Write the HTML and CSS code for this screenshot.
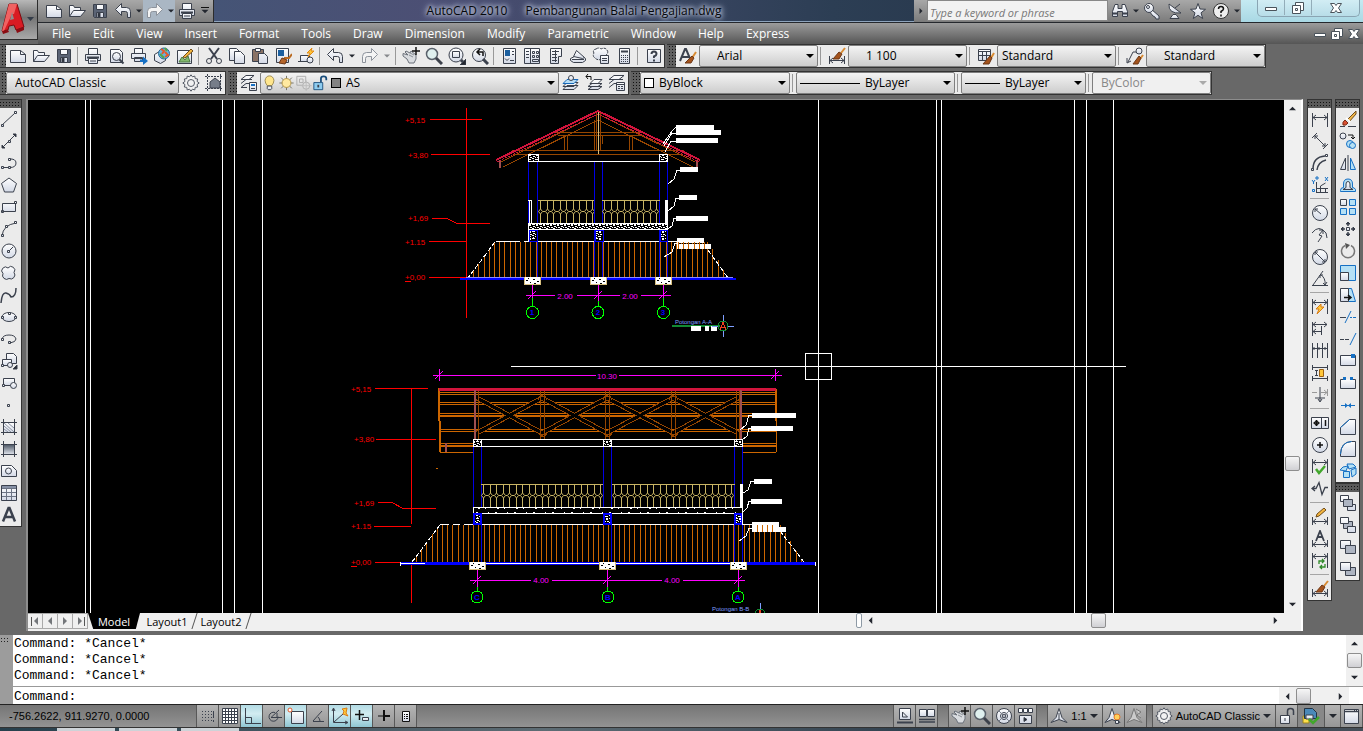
FILE: index.html
```html
<!DOCTYPE html>
<html lang="en">
<head>
  <meta charset="UTF-8">
  <meta name="viewport" content="width=device-width, initial-scale=1.0">
  <title>AutoCAD 2010 - Pembangunan Balai Pengajian.dwg</title>
  <link rel="stylesheet" href="styles.css">
</head>
<body>
  <!-- icon sprite -->
  <svg class="sprite" aria-hidden="true">
    <defs>
      <linearGradient id="paper" x1="0" y1="0" x2="0" y2="1"><stop offset="0" stop-color="#fff"/><stop offset="1" stop-color="#d3d9e6"/></linearGradient>
      <linearGradient id="fade" x1="0" y1="0" x2="0" y2="1"><stop offset="0" stop-color="#4b5563"/><stop offset="1" stop-color="#e2e6ee"/></linearGradient>
    </defs>
    <symbol id="new" viewBox="0 0 18 18"><path class="w" d="M1.500 3.500h10l5 4v8h-15z"/><path d="M11.500 3.500v4h5"/></symbol>
    <symbol id="open" viewBox="0 0 18 18"><path class="w" d="M1.500 14.500v-11h4l1 2h6v3"/><path class="w" d="M1.500 14.500l4-6h12l-5 6z"/></symbol>
    <symbol id="save" viewBox="0 0 18 18"><path d="M2.500 2.500h13v13h-12l-1-1z" fill="#5b6475"/><path class="w" d="M5.500 2.500h7v5h-7zM5.500 10.500h7v5h-7z"/><path class="k" d="M7 11h2v4h-2z"/></symbol>
    <symbol id="print" viewBox="0 0 18 18"><path class="w" d="M4.500 7.500v-6h9v6M1.500 7.500h15v6h-15z"/><path d="M3 10.500h12" stroke-width="2"/><path class="w" d="M4.500 11.500h9v5h-9zM6 14h6"/></symbol>
    <symbol id="preview" viewBox="0 0 18 18"><path class="w" d="M3.500 15.500v-13h9l3 3v10z"/><circle class="w" cx="9.500" cy="9.500" r="4"/><path d="M12.500 12.500l4 4" stroke-width="2"/></symbol>
    <symbol id="publish" viewBox="0 0 18 18"><path class="w" d="M4.500 6.500v-5h8v5M1.500 6.500h14v5h-14zM4.500 10.500h8v4h-8z"/><path d="M10 12.500h3v-3l5 4.500-5 4v-3h-3z" fill="#1670c4" stroke="none"/></symbol>
    <symbol id="globe" viewBox="0 0 18 18"><path class="w" d="M1.500 7.500l5-3 6 2v7l-5 3-6-3z"/><circle cx="11" cy="6.500" r="5.500" fill="#66b5df" stroke="#2a6a9d"/><path d="M8 2l3 2-2 3M12 5l3 3-3 2" stroke="#e4592a" stroke-width="2"/><path d="M7 7l4 4M12 1l2 3" stroke="#58a445" stroke-width="2"/></symbol>
    <symbol id="markup" viewBox="0 0 18 18"><path class="w" d="M1.500 3.500h14v13h-14z"/><path d="M3 15l3-5 3 3 3-4 2 6z" fill="#83b86c" stroke="#4c7d43"/><path d="M7 10l8-8 2 2-8 7z" fill="#f3b53f" stroke="#704d1b"/></symbol>
    <symbol id="cut" viewBox="0 0 18 18"><path d="M4 1l8 11M14 1L6 12" stroke-width="2"/><circle cx="4" cy="14" r="2.500"/><circle cx="14" cy="14" r="2.500"/></symbol>
    <symbol id="copyclip" viewBox="0 0 18 18"><path class="w" d="M1.500 1.500h7l3 3v9h-10z"/><path class="w" d="M6.500 4.500h6l4 4v8h-10z"/></symbol>
    <symbol id="paste" viewBox="0 0 18 18"><path d="M1.500 2.500h11v12h-11z" fill="#8a7265"/><path class="w" d="M4.500 1.500h5v3h-5zM7.500 6.500h6l3 3v7h-9z"/></symbol>
    <symbol id="match" viewBox="0 0 18 18"><path class="w" d="M2.500 1.500h12v14h-12z"/><path d="M4 3h6v6H4z" fill="#1b5f9f" stroke="none"/><path d="M10 11h5l3-4" stroke="#bb6b22" stroke-width="2"/><path d="M8 11l5 2-2 4-6-1z" fill="#b5652a" stroke="#6d3817"/></symbol>
    <symbol id="blockedit" viewBox="0 0 18 18"><path class="w" d="M3.500 8.500h9v6h-9z"/><circle class="w" cx="13" cy="13" r="3"/><path d="M1 14.500h5"/><path d="M15 1l-5 5h3l-2 4 6-6h-3z" fill="#ffc739" stroke="#e28b15"/></symbol>
    <symbol id="undo" viewBox="0 0 18 18"><path class="w" d="M1.500 7.500l6-6v4h5q4 0 4 4v6h-3v-4q0-2-2-2h-4v4z"/></symbol>
    <symbol id="redo" viewBox="0 0 18 18"><path d="M16.500 7.500l-6-6v4h-5q-4 0-4 4v6h3v-4q0-2 2-2h4v4z" fill="#f4f4f4" stroke="#8c929b"/></symbol>
    <symbol id="pan" viewBox="0 0 18 18"><path d="M1 6.500l5 1.500-3-3 1-1 4 2 1-2 5 4v4l-2 4H7l-2-4-4-3z" fill="#d9dce0" stroke="#6b717a"/><path d="M7 8l4 2M8 6l4 2" stroke="#8b9097"/><path d="M14 0v8M10 4h8" stroke="#111" stroke-width="1.500"/></symbol>
    <symbol id="zoom" viewBox="0 0 18 18"><circle cx="7" cy="7" r="5.500" fill="#dff0ef" stroke="#59616b" stroke-width="1.500"/><path d="M11 11l6 6" stroke="#3c414b" stroke-width="3"/></symbol>
    <symbol id="zoomwin" viewBox="0 0 18 18"><circle class="w" cx="8" cy="8" r="7"/><path class="w" d="M4.500 4.500h7v6h-7z"/><path d="M13 13l3 3" stroke-width="3"/><path class="k" d="M18 12v6h-6z"/></symbol>
    <symbol id="zoomprev" viewBox="0 0 18 18"><circle class="w" cx="8" cy="8" r="6.500"/><path d="M12 12l5 5" stroke-width="3"/><path d="M12 9V5H6M9 2L6 5l3 3" stroke="#111" stroke-width="1.500"/></symbol>
    <symbol id="props" viewBox="0 0 18 18"><path class="w" d="M3.500 1.500h12v15h-12z"/><path d="M5 3h5v6H5z" fill="#1b5f9f" stroke="none"/><path d="M12 4.500h2M12 7.500h2M5 11.500l2 2 2-2M10 13.500h4"/></symbol>
    <symbol id="dcenter" viewBox="0 0 18 18"><path class="w" d="M1.500 1.500h15v15h-15z"/><path d="M7.500 2v14M3 4.500h3M3 7.500h3M3 10.500h3M9.500 4.500h2v2h-2zM13.500 4.500h2v2h-2zM9.500 8.500h2v2h-2zM13.500 8.500h2v2h-2zM9.500 12.500h6v2h-6z"/></symbol>
    <symbol id="palette" viewBox="0 0 18 18"><path class="w" d="M4.500 1.500h11v8h-3v7h-8z"/><path d="M6 4.500h7M6 7.500h5M6 10.500h5M6 13.500h5M9.500 3v12"/></symbol>
    <symbol id="sheet" viewBox="0 0 18 18"><path class="w" d="M1.500 11.500l4-2h8l3 2v2l-3 2h-9l-3-2z"/><path class="w" d="M4.500 9.500l3-6 8 7-2 1zM3 12.500h12"/></symbol>
    <symbol id="markset" viewBox="0 0 18 18"><path class="w" stroke-dasharray="3 1" d="M4 2q3-2 5 0 4-2 6 1 2 3-1 5 0 4-4 4-4 2-7-1-3-2-1-5-2-3 2-4z"/><path class="w" d="M8.500 8.500h8v8h-8zM10 11.500h5M10 13.500h5"/></symbol>
    <symbol id="calc" viewBox="0 0 18 18"><path class="w" d="M4.500 1.500h10v15h-10z"/><path d="M6 4.500h7" stroke-width="2"/><path d="M6 8.500h7M6 10.500h7M6 12.500h7M6 14.500h7" stroke-dasharray="1 1"/></symbol>
    <symbol id="help" viewBox="0 0 18 18"><path class="w" d="M3.500 2.500h13v13h-13z"/><path d="M7.500 7q0-2.500 2.500-2.500T12.500 7q0 1.500-2.500 2.500v1.500M10 12.500v2" stroke-width="2"/></symbol>
    <symbol id="textstyle" viewBox="0 0 18 18"><path d="M1 14L6 2h1l5 12M3 10h7" stroke-width="2"/><path d="M17 5l-4 6" stroke="#d98b32" stroke-width="2"/><path d="M13 9l2 2-3 5-6 0z" fill="#a4531c" stroke="#6d3817"/></symbol>
    <symbol id="dimstyle" viewBox="0 0 18 18"><path d="M1.500 9v8M16.500 9v8M2 13.500h14M5 11l-3 2.500L5 16M13 11l3 2.500-3 2.500"/><path d="M17 1l-4 5" stroke="#d98b32" stroke-width="2"/><path d="M11 5l3 2-3 5-6 0z" fill="#a4531c" stroke="#6d3817"/></symbol>
    <symbol id="tablestyle" viewBox="0 0 18 18"><path class="w" d="M1.500 2.500h12v11h-12z"/><path d="M2 4.500h11M2 8.500h11M5.500 4v9M9.500 4v9"/><path d="M17 6l-3 5" stroke="#d98b32" stroke-width="2"/><path d="M13 9l2 2-3 6-6 0z" fill="#a4531c" stroke="#6d3817"/></symbol>
    <symbol id="mleader" viewBox="0 0 18 18"><path d="M2 15L7 5h4M1 11v5l4-2"/><circle class="w" cx="13" cy="4" r="3"/><path d="M17 8l-3 4" stroke="#d98b32" stroke-width="2"/><path d="M13 9l2 2-3 6-5 0z" fill="#a4531c" stroke="#6d3817"/></symbol>
    <symbol id="gear" viewBox="0 0 18 18"><path d="M9 .8l1.400 2 2.400-.7.400 2.500 2.500.4-.7 2.400 2.200 1.600-2.200 1.600.7 2.400-2.500.4-.4 2.500-2.400-.7L9 17.200l-1.400-2-2.400.7-.4-2.500-2.500-.4.7-2.400L.8 9l2.200-1.600L2.300 5l2.500-.4.400-2.500 2.400.7z" fill="#f2f2f2" stroke="#555b66"/><circle cx="9" cy="9" r="3.500" stroke="#555b66"/></symbol>
    <symbol id="mywork" viewBox="0 0 18 18"><path d="M0 2.500h18M0 14.500h18M2.500 0v18M15.500 0v18" stroke-dasharray="2 1"/><path d="M5 14V8l5-4 5 4v6z" fill="#767d89"/></symbol>
    <symbol id="layerprops" viewBox="0 0 18 18"><path class="w" d="M1 5.500l5-4h8l-5 4zM1 9.500l5-4h6M1 13.500l5-4h3M1 13.500h6"/><path class="w" d="M9.500 8.500h7v8h-7z"/><path d="M11 10h4v2h-4z" fill="#1670c4" stroke="none"/><path d="M11 14.500h4"/></symbol>
    <symbol id="bulb" viewBox="0 0 18 18"><path d="M6.500 12Q4 9 4 6q1-5 5-5t5 5q0 3-2.500 6z" fill="#ffe68d" stroke="#9a8648"/><path class="w" d="M6.500 12.500h5v3l-1 1h-3l-1-1z"/></symbol>
    <symbol id="sun" viewBox="0 0 18 18"><path d="M9 1v16M1 9h16M3 3l12 12M15 3L3 15" stroke="#6b6a5e"/><circle cx="9" cy="9" r="5" fill="#ffe9a0" stroke="#ad8e42"/></symbol>
    <symbol id="vpfreeze" viewBox="0 0 18 18"><path d="M1.500 1.500h10v10h-10zM4.500 4.500h4v4h-4z" stroke="#aaa"/><circle cx="12" cy="12" r="4" fill="#ddd" stroke="#aaa"/><path d="M12 6v12M6 12h12" stroke="#bbb"/></symbol>
    <symbol id="unlock" viewBox="0 0 18 18"><path d="M9.500 8V4q0-2.500 3-2.500t3 2.500v2" stroke="#1a4e7c" stroke-width="2"/><path d="M1.500 8.500h10v8h-10z" fill="#8fcdf0" stroke="#1a4e7c"/><path d="M6.500 11v3" stroke-width="2"/></symbol>
    <symbol id="lcurrent" viewBox="0 0 18 18"><path class="w" d="M1 15.500l4-4h11l-4 4zM1 12.500l4-4h11l-4 4z"/><path d="M1 9.500l4-4h11l-4 4z" fill="#b5dcf5" stroke="#1768b8"/><circle class="w" cx="9" cy="4" r="2.500"/></symbol>
    <symbol id="lprev" viewBox="0 0 18 18"><path class="w" d="M3 15.500l4-3h10l-4 3zM3 12.500l4-3h10l-4 3zM5 9.500l4-4h8l-4 4z"/><path d="M6 6V2.500H1M3 0L1 2.500 3 5" stroke="#111"/></symbol>
    <symbol id="lstate" viewBox="0 0 18 18"><path class="w" d="M1 5.500l5-4h10l-5 4zM1 9.500l5-4h9M1 13.500l5-4h3"/><path class="w" d="M8.500 8.500h8v8h-8z"/><path d="M8.500 10.500h8M10 12.500h2M13 12.500h2M10 14.500h2M13 14.500h2"/></symbol>

    <symbol id="line" viewBox="0 0 18 18"><path d="M2 15L15 3"/><path class="w" d="M1.500 14.500h2v2h-2zM14.500 1.500h2v2h-2z"/></symbol>
    <symbol id="xline" viewBox="0 0 18 18"><path d="M2 16L16 2"/><path class="w" d="M8.500 8.500h2v2h-2z"/><path class="k" d="M2 13v3h3zM13 2h3v3z"/></symbol>
    <symbol id="pline" viewBox="0 0 18 18"><path d="M3 13.500h7q6 0 6-4.500T9 5"/><path class="w" d="M1.500 12.500h2v2h-2zM8.500 12.500h2v2h-2zM8.500 4.500h2v2h-2z"/></symbol>
    <symbol id="polygon" viewBox="0 0 18 18"><path class="w" d="M9 2l7.500 5.500-3 8.500h-9l-3-8.500z"/></symbol>
    <symbol id="rect" viewBox="0 0 18 18"><path class="w" d="M2.500 5.500h13v8h-13zM1.500 12.500h2v2h-2zM14.500 3.500h2v2h-2z"/></symbol>
    <symbol id="arc" viewBox="0 0 18 18"><path d="M2 16Q3 5 16 3"/><path class="w" d="M1.500 14.500h2v2h-2zM14.500 1.500h2v2h-2zM5.500 5.500h2v2h-2z"/></symbol>
    <symbol id="circle" viewBox="0 0 18 18"><circle class="w" cx="9" cy="9" r="7"/><path d="M9 9l4-4"/><path class="w" d="M7.500 8.500h2v2h-2z"/></symbol>
    <symbol id="revcloud" viewBox="0 0 18 18"><path class="w" d="M8 4a3.500 3.500 0 0 1 6 4.500 4 4 0 0 1-5 6A4 4 0 0 1 3 9.500 3.500 3.500 0 1 1 8 4z"/></symbol>
    <symbol id="spline" viewBox="0 0 18 18"><path d="M1 17Q2 6 6 7t5 4q5 0 5-9" stroke-width="1.500"/></symbol>
    <symbol id="ellipse" viewBox="0 0 18 18"><ellipse class="w" cx="9" cy="9" rx="7" ry="4.500"/><path class="w" d="M1.500 8.500h2v2h-2zM8.500 4.500h2v2h-2zM14.500 8.500h2v2h-2z"/></symbol>
    <symbol id="ellarc" viewBox="0 0 18 18"><path d="M2 9q1-4 7-4t7 4q0 3-6 4" /><path class="w" d="M1.500 8.500h2v2h-2zM8.500 11.500h2v2h-2z"/></symbol>
    <symbol id="insert" viewBox="0 0 18 18"><path class="w" d="M6.500 1.500h7l3 3v7h-10z"/><path class="w" d="M2.500 7.500h9v6h-9z"/><circle class="w" cx="10" cy="13" r="2.500"/><path class="w" d="M1.500 12.500h2v2h-2z"/><path class="k" d="M17 13v4h-4z"/></symbol>
    <symbol id="makeblock" viewBox="0 0 18 18"><path class="w" d="M3.500 4.500h11v7h-11z"/><circle class="w" cx="13.500" cy="11.500" r="3"/><path class="w" d="M2.500 10.500h2v2h-2z"/></symbol>
    <symbol id="point" viewBox="0 0 18 18"><path class="w" d="M7.500 8.500h2v2h-2z"/></symbol>
    <symbol id="hatch" viewBox="0 0 18 18"><path class="w" d="M3.500 4.500h11v10h-11z"/><path d="M4 8l7 6M4 5l10 9M8 5l6 5M4 11l4 3" stroke="#8b93a3"/><path d="M1 4.500h16M1 14.500h16M3.500 1v16M14.500 1v16"/></symbol>
    <symbol id="gradient" viewBox="0 0 18 18"><path d="M3.500 4.500h11v10h-11z" fill="url(#fade)"/><path d="M1 4.500h16M1 14.500h16M3.500 1v16M14.500 1v16"/></symbol>
    <symbol id="region" viewBox="0 0 18 18"><path class="w" d="M1.500 3.500h10l5 5v6h-15z"/><circle class="w" cx="8.500" cy="9" r="3"/></symbol>
    <symbol id="table" viewBox="0 0 18 18"><path class="w" d="M1.500 1.500h15v15h-15z"/><path d="M2 3h14" stroke="#8791a5" stroke-width="2"/><path d="M2 4.500h14M2 8.500h14M2 12.500h14M6.500 5v11M11.500 5v11" stroke="#6c7484"/></symbol>
    <symbol id="mtext" viewBox="0 0 18 18"><path d="M3 15.500L8.500 2h1L15 15.500M5 11h8" stroke-width="2.500"/></symbol>

    <symbol id="dlin" viewBox="0 0 18 18"><path d="M1.500 3v14M16.500 3v14M2 7.500h14M5 5L2 7.500 5 10M13 5l3 2.500-3 2.500"/></symbol>
    <symbol id="dali" viewBox="0 0 18 18"><path d="M1 6l5-5M12 17l5-5M4 4l10 10M4 7V4h3M14 11v3h-3"/></symbol>
    <symbol id="darc" viewBox="0 0 18 18"><path d="M2 15Q2 3 14 2M6 16Q7 8 15 6" stroke-width="1.500"/><path class="w" d="M.5 14.500h2v2h-2zM14.500 .5h2v2h-2z"/></symbol>
    <symbol id="dord" viewBox="0 0 18 18"><path d="M5.500 6v11M9.500 17v-7l5-3M5 12.500h12M5 16.500h12M14.500 12v5"/><path class="b" d="M1 4l1.500 2L4 4M2.500 6v2M5 1h2v2H5zM14 1l3 4M17 1l-3 4M1.500 13.500h2v2h-2z"/></symbol>
    <symbol id="drad" viewBox="0 0 18 18"><circle class="w" cx="9" cy="9" r="7.500"/><path d="M10 10L4 5M4 8V5h3"/></symbol>
    <symbol id="djog" viewBox="0 0 18 18"><path d="M1 7q7-9 14 0l1 5M12 4L8 9l3 1-4 6M12 8V4H8"/></symbol>
    <symbol id="ddia" viewBox="0 0 18 18"><circle class="w" cx="9" cy="9" r="7.500"/><path d="M4 4l10 10M4 7V4h3M14 11v3h-3"/></symbol>
    <symbol id="dang" viewBox="0 0 18 18"><path d="M1 15.500h16M2 15L12 1M9 4q6 4 5 11M12 5H9v3M12 13l2 2 2-3"/></symbol>
    <symbol id="dquick" viewBox="0 0 18 18"><path d="M1.500 1v15M16.500 1v15M2 4.500h14M5 2L2 4.500 5 7M13 2l3 2.500L13 7"/><path d="M10 6l-5 5h3l-2 5 7-7h-3z" fill="#ffc739" stroke="#d97d15"/></symbol>
    <symbol id="dbase" viewBox="0 0 18 18"><path d="M1.500 2v14M2 4.500h14M2 11.500h8M10.500 6v9M5 2L2 4.500 5 7M13 2l3 2.500L13 7M5 9l-3 2.500L5 14"/></symbol>
    <symbol id="dcont" viewBox="0 0 18 18"><path d="M1.500 1v15M6.500 1v15M11.500 1v15M16.500 1v15M2 6.500h14M3 5v3M8 5v3M14 5v3"/></symbol>
    <symbol id="dspace" viewBox="0 0 18 18"><path d="M1 3.500h16M1 14.500h16M1.500 1v5M16.500 1v5M1.500 12v5M16.500 12v5M5.500 6v6M4 6.500h3M4 11.500h3"/><path d="M8.500 5.500h4v7h-4z" fill="#ffc739" stroke="#9c6011"/></symbol>
    <symbol id="dbreak" viewBox="0 0 18 18"><path d="M1 6.500h5M10 6.500h6M16.500 3v7M13 4l3 2.500L13 9" stroke="#999"/><path d="M9 1v14M4 12h10M7 13l2 3 2-3"/></symbol>
    <symbol id="tol" viewBox="0 0 18 18"><path class="w" d="M.5 3.500h17v11H.5zM10.500 4v10"/><path d="M5.500 6v6M2.500 9h6M14.500 6v6" stroke="#111" stroke-width="1.500"/><circle cx="5.500" cy="9" r="2" stroke="#111"/></symbol>
    <symbol id="center" viewBox="0 0 18 18"><circle class="w" cx="9" cy="9" r="7.500"/><path d="M9 6v6M6 9h6" stroke="#111" stroke-width="1.500"/></symbol>
    <symbol id="inspect" viewBox="0 0 18 18"><path d="M1.500 1v14M16.500 1v14M2 4.500h14M5 2L2 4.500 5 7M13 2l3 2.500L13 7"/><path d="M5 11l3 4 6-7" stroke="#42a72c" stroke-width="2.500"/></symbol>
    <symbol id="joglin" viewBox="0 0 18 18"><path d="M1 8.500h4l3-6 3 12 3-7h3M4 6L1 8.500 4 11" stroke-width="1.300"/></symbol>
    <symbol id="dedit" viewBox="0 0 18 18"><path d="M1.500 9v8M16.500 9v8M2 13.500h14M5 11l-3 2.500L5 16M13 11l3 2.500-3 2.500"/><path d="M5 9l1-3 7-6 2 2-7 6z" fill="#f3b53f" stroke="#704d1b"/></symbol>
    <symbol id="dtedit" viewBox="0 0 18 18"><path d="M1.500 10v7M16.500 10v7M2 14.500h14M5 12l-3 2.500L5 17M13 12l3 2.500-3 2.500"/><path d="M5 11L9 1l4 10M7 7h5" stroke-width="1.800"/></symbol>
    <symbol id="dupd" viewBox="0 0 18 18"><path d="M1.500 1v15M16.500 1v15M2 4.500h14M5 2L2 4.500 5 7M13 2l3 2.500L13 7"/><path d="M8 12V9h5M11 7l2 2-2 2M14 12v3H9M11 13l-2 2 2 2" stroke="#2f8a28" stroke-width="1.300"/></symbol>

    <symbol id="erase" viewBox="0 0 18 18"><path d="M1 16.500h5M9 16.500h8"/><path d="M17 1L8 10l2 2 7-8z" fill="#f0b64a" stroke="#704d1b"/><path d="M7 8l4 4" stroke="#fff" stroke-width="2"/><path d="M6 10l3 3q-2 3-5 2-1-3 2-5z" fill="#d94f31" stroke="#7a2a15"/></symbol>
    <symbol id="copy" viewBox="0 0 18 18"><circle class="w" cx="4" cy="4" r="3"/><path d="M9 3h5v4M12 5l2 2 2-2" stroke="#111"/><circle class="lb" cx="11" cy="12" r="3.500"/><circle class="lb" cx="13.500" cy="13.500" r="3"/></symbol>
    <symbol id="mirror" viewBox="0 0 18 18"><path class="w" d="M6.500 4v11.500h-5z"/><path class="lb" d="M11.500 4v11.500h5z"/><path d="M9 1v16"/></symbol>
    <symbol id="offset" viewBox="0 0 18 18"><path class="lb" d="M1.500 15.500h15v-2q-1-2-3-2V8q0-5-4.500-5T4.500 8v3.500q-3 0-3 3z"/><path class="w" d="M4 13.500h10l-3-2V8q0-2.500-2-2.500T7 8v3.500z"/></symbol>
    <symbol id="array" viewBox="0 0 18 18"><path class="w" d="M1.500 1.500h6v6h-6z"/><path class="lb" d="M10.500 1.500h6v6h-6zM1.500 10.500h6v6h-6zM10.500 10.500h6v6h-6z"/></symbol>
    <symbol id="move" viewBox="0 0 18 18"><path class="k" d="M9 2l2 2H7zM9 16l2-2H7zM2 9l2-2v4zM16 9l-2-2v4z"/><path d="M9 3v3M9 12v3M3 9h3M12 9h3" stroke-width="1.500"/><path class="w" d="M7.500 7.500h3v3h-3z"/></symbol>
    <symbol id="rotate" viewBox="0 0 18 18"><path d="M6 3.500a6.500 6.500 0 1 0 6 0" stroke="#777" stroke-width="1.500"/><path d="M6 1l5 2-4 4z" fill="#555" stroke="none"/></symbol>
    <symbol id="scale" viewBox="0 0 18 18"><path class="lb" d="M1.500 1.500h15v15h-15z"/><path class="w" d="M1.500 8.500h8v8h-8z"/></symbol>
    <symbol id="stretch" viewBox="0 0 18 18"><path class="lb" d="M9.500 2.500h3l4 13h-7z"/><path class="w" d="M1.500 2.500h8v13h-8z"/><path d="M5 11.500h7M9 9l3 2.500L9 14" stroke="#111" stroke-width="1.500"/></symbol>
    <symbol id="trim" viewBox="0 0 18 18"><path d="M1 9.500h6"/><path class="b" d="M6 15l6-12M11 9.500h2M14 9.500h3"/></symbol>
    <symbol id="extend" viewBox="0 0 18 18"><path d="M1 9.500h4M6 9.500h4"/><path class="b" d="M11 15l6-12"/></symbol>
    <symbol id="breakpt" viewBox="0 0 18 18"><path class="w" d="M1.500 3.500h15v10h-15z"/><path d="M12 2h4v4h-4z" fill="#1670c4" stroke="none"/></symbol>
    <symbol id="break" viewBox="0 0 18 18"><path class="w" d="M5.500 5.500h-4v9h15v-9h-4"/><path d="M4 3h3v3H4zM11 3h3v3h-3z" fill="#1670c4" stroke="none"/></symbol>
    <symbol id="join" viewBox="0 0 18 18"><path class="b" d="M2 9.500h14"/><path d="M6 7l3 2.500L6 12zM12 7L9 9.500l3 2.500z" fill="#1670c4" stroke="none"/></symbol>
    <symbol id="chamfer" viewBox="0 0 18 18"><path class="w" d="M1.500 9.500v7h15v-15h-6z"/><path class="b" d="M1.500 9.500l9-8"/></symbol>
    <symbol id="fillet" viewBox="0 0 18 18"><path class="w" d="M1.500 14v2.500h15v-15h-4Q2 2 1.500 14z"/><path class="b" d="M1.500 14Q2 2 12.500 1.500"/></symbol>
    <symbol id="explode" viewBox="0 0 18 18"><path class="lb" d="M1 8l3-3 5-1-2 5zM8 2h6l3 3-7 2zM4.500 9.500h6v6h-6zM12 8l5-2v6l-4 3z"/></symbol>
    <symbol id="front" viewBox="0 0 18 18"><path class="w" d="M1.500 1.500h8v6h-8zM8.500 10.500h8v6h-8z"/><path d="M4.500 5.500h9v7h-9z" fill="#aeb5c2"/></symbol>
    <symbol id="back" viewBox="0 0 18 18"><path d="M4.500 5.500h9v7h-9z" fill="#aeb5c2"/><path class="w" d="M1.500 1.500h8v6h-8zM8.500 10.500h8v6h-8z"/></symbol>
    <symbol id="above" viewBox="0 0 18 18"><path class="w" d="M1.500 2.500h10v8h-10z"/><path d="M6.500 7.500h10v8h-10z" fill="#aeb5c2"/></symbol>
    <symbol id="under" viewBox="0 0 18 18"><path d="M6.500 7.500h10v8h-10z" fill="#aeb5c2"/><path class="w" d="M1.500 2.500h10v8h-10z"/></symbol>

    <symbol id="binoc" viewBox="0 0 18 18"><path class="w" d="M4 2.500h3v4h4v-4h3l2.500 7v5h-5v-5h-5v5h-5v-5z"/><path d="M2 11.500h4M12 11.500h4" stroke-width="2"/></symbol>
    <symbol id="key" viewBox="0 0 18 18"><path class="w" d="M8 7l8 7v3h-3l-1-2-2-1-4-5z"/><circle class="w" cx="6" cy="6" r="4.500"/><circle cx="5" cy="5" r="1.500"/></symbol>
    <symbol id="dish" viewBox="0 0 18 18"><path class="w" d="M4 16.500h9l-3-4H7z"/><path class="w" d="M3 2q-1 10 12 9z"/><path d="M9 6l5-4"/></symbol>
    <symbol id="star" viewBox="0 0 18 18"><path class="w" d="M9 1.500l2 5.500 5.500.3-4.500 3.500 1.700 5.700L9 13.300l-4.700 3.200L6 10.800 1.500 7.300 7 7z"/></symbol>
    <symbol id="info" viewBox="0 0 18 18"><circle cx="9" cy="9" r="7.500" fill="#eee" stroke="#333"/><path d="M6.500 7Q6.500 4.500 9 4.500T11.500 7Q11.500 8 9 9.500V11M9 12.500v2" stroke="#111" stroke-width="1.500"/></symbol>
    <symbol id="min" viewBox="0 0 14 14"><path d="M1.500 6.500h11v3h-11z"/></symbol>
    <symbol id="restore" viewBox="0 0 14 14"><path d="M4.500 1.500h8v8h-8z"/><path d="M1.500 4.500h8v8h-8z"/><path d="M4.500 7.500h2v2h-2z"/></symbol>
    <symbol id="close" viewBox="0 0 14 14"><path d="M1.500 2.500h4L7 4.500l1.500-2h4L9.500 7l3 4.500h-4L7 9.500l-1.500 2h-4l3-4.500z"/></symbol>

    <symbol id="snap" viewBox="0 0 18 18"><path d="M3 4.500h10M3 7.500h10M3 10.500h10M3 13.500h10" stroke-dasharray="1 2"/><path d="M14.500 4v7M14.500 13v2"/></symbol>
    <symbol id="grid" viewBox="0 0 18 18"><path d="M1.500 1.500h15v15h-15zM4.500 2v14M7.500 2v14M10.500 2v14M13.500 2v14M2 4.500h14M2 7.500h14M2 10.500h14M2 13.500h14" fill="#fff"/></symbol>
    <symbol id="ortho" viewBox="0 0 18 18"><path d="M2.500 1v15.500H18M3 10.500h5.500v6"/></symbol>
    <symbol id="polar" viewBox="0 0 18 18"><path d="M10 5.500a4.500 4.500 0 1 0 3 4M6 10.500L14 3M6 10.500h11M12 6v4"/></symbol>
    <symbol id="osnap" viewBox="0 0 18 18"><path class="w" d="M4.500 4.500h12v12h-12z"/><circle cx="3" cy="3" r="2" stroke="#e4592a" fill="#fff"/></symbol>
    <symbol id="otrack" viewBox="0 0 18 18"><path d="M4 14.500h11M4 14L13 4M9 10q2 2 2 4"/></symbol>
    <symbol id="ducs" viewBox="0 0 18 18"><path d="M2.500 2v13.500H16M3 15l9-8M1 4l1.500-3L4 4M14 14l3 1.500-3 1.500"/><path d="M11 2l5-1-1 5 2 3-5-2 1-3z" fill="#ffc739" stroke="#d97d15"/></symbol>
    <symbol id="dyn" viewBox="0 0 18 18"><path d="M6.500 3v10M2 7.500h9" stroke="#111" stroke-width="1.500"/><path class="w" d="M9.500 10.500h6v3h-6z"/></symbol>
    <symbol id="lwt" viewBox="0 0 18 18"><path d="M3 9h7" stroke="#111"/><path d="M9 3v11M9 9h6" stroke="#111" stroke-width="2"/></symbol>
    <symbol id="qp" viewBox="0 0 18 18"><path class="w" d="M5.500 4.500h7v10h-7z" stroke="#111"/><path d="M7 7.500h1M9 7.500h2M7 9.500h1M9 9.500h2M7 11.500h1M9 11.500h2" stroke="#111"/></symbol>
    <symbol id="model" viewBox="0 0 18 18"><path class="w" d="M3.500 1.500h11v11h-11z"/><path d="M6.500 5v5h5z"/><path d="M1 15.500h16" stroke-width="2"/></symbol>
    <symbol id="qview" viewBox="0 0 18 18"><path class="w" d="M1.500 2.500h7v7h-7zM9.500 2.500h7v7h-7z"/><path d="M1 12.500h16M1 15h16" stroke-width="1.500"/></symbol>
    <symbol id="wheel" viewBox="0 0 18 18"><circle class="w" cx="9" cy="9" r="7.500"/><circle cx="9" cy="9" r="3.500"/><path d="M4 4l10 10M14 4L4 14" stroke="#7b818c"/><circle class="w" cx="9" cy="9" r="1.500"/></symbol>
    <symbol id="motion" viewBox="0 0 18 18"><path class="w" d="M1.500 1.500h4v4h-4zM6.500 1.500h4v4h-4zM11.500 1.500h4v4h-4zM2.500 8.500h12v8h-12z"/><path class="k" d="M7 10.500l3 2L7 14.500z"/></symbol>
    <symbol id="anno" viewBox="0 0 18 18"><path class="w" d="M9 1.500l3 9 5 5-8-3-8 3 5-5z"/><path d="M9 6v6"/></symbol>
    <symbol id="annovis" viewBox="0 0 18 18"><path class="w" d="M8 1.500l3 9 5 5-8-3-7 3 4-5z"/><circle cx="13" cy="10" r="3" fill="#ffd15c" stroke="#e4762a"/><path class="w" d="M11.500 13.500h3v3h-3z"/></symbol>
    <symbol id="annoauto" viewBox="0 0 18 18"><path d="M8 1.500l3 9 5 5-8-3-7 3 4-5zM10 2l5 3-4 3 4 3" fill="#ccc" stroke="#777"/></symbol>
    <symbol id="tunlock" viewBox="0 0 18 18"><path d="M9.500 8V4q0-2.500 3-2.500t3 2.500v4" stroke-width="1.500"/><path class="w" d="M2.500 8.500h9v8h-9z"/><path d="M7 11v3"/></symbol>
    <symbol id="tray" viewBox="0 0 18 18"><path d="M1 9h6v7H1z" fill="#ffe04a" stroke="#9b8420"/><path d="M2.500 1.500h8l4 4v6h-12z" fill="#4a89b9" stroke="#234"/><path class="w" d="M4 8h7v4H4z"/><path d="M7 12l4 4 6-6" stroke="#42a72c" stroke-width="2.500"/></symbol>
    <symbol id="clean" viewBox="0 0 18 18"><path class="w" d="M1.500 2.500h14v14h-14z"/><path d="M2 4.500h13M11 3.500h1M13 3.500h1" stroke-width="1.500"/></symbol>
    <symbol id="up" viewBox="0 0 8 8"><path class="k" d="M0 6l4-4 4 4z" stroke="none"/></symbol>
    <symbol id="down" viewBox="0 0 8 8"><path class="k" d="M0 2h8L4 6z" stroke="none"/></symbol>
    <symbol id="left" viewBox="0 0 8 8"><path class="k" d="M6 0v8L2 4z" stroke="none"/></symbol>
    <symbol id="right" viewBox="0 0 8 8"><path class="k" d="M2 0v8l4-4z" stroke="none"/></symbol>
  </svg>

  <header class="header">
    <button class="app-button" aria-label="Application menu">
      <svg class="app-logo" viewBox="0 0 38 39"><path d="M2 31L9 4l8 0 7 23-8 3-2-5-5 1-1 4z" fill="#d91b23" stroke="#7d0b10"/><path d="M9 4l8 0-3 10-2 0-8 17H2z" fill="#f06262"/><path d="M10 20l2-8 2 7z" fill="#8d8d8d"/><path d="M2 31l6-1 1 2-6 2zM16 30l8-3v3l-7 3z" fill="#8b0d13"/><path d="M27 17h7l-3.500 4z" fill="#333b48"/></svg>
    </button>
    <div class="titlebar">
      <div class="quick">
        <button class="tool" aria-label="New"><svg class="icon"><use href="#new"/></svg></button>
        <button class="tool" aria-label="Open"><svg class="icon"><use href="#open"/></svg></button>
        <button class="tool" aria-label="Save"><svg class="icon"><use href="#save"/></svg></button>
        <button class="tool" aria-label="Undo"><svg class="icon"><use href="#undo"/></svg></button>
        <button class="drop" aria-label="Undo list"><svg><use href="#down"/></svg></button>
        <button class="tool lit" aria-label="Redo"><svg class="icon"><use href="#redo"/></svg></button>
        <button class="drop lit" aria-label="Redo list"><svg><use href="#down"/></svg></button>
        <button class="tool" aria-label="Plot"><svg class="icon"><use href="#print"/></svg></button>
        <button class="drop more" aria-label="Customize"><svg><use href="#down"/></svg></button>
      </div>
      <div class="title"><span>AutoCAD 2010</span><span>Pembangunan Balai Pengajian.dwg</span></div>
      <div class="infocenter">
        <button class="drop" aria-label="Collapse search"><svg><use href="#right"/></svg></button>
        <input type="text" class="search" placeholder="Type a keyword or phrase" aria-label="Search">
        <button class="tool" aria-label="Search"><svg class="icon"><use href="#binoc"/></svg></button>
        <button class="drop" aria-label="Search options"><svg><use href="#down"/></svg></button>
        <button class="tool" aria-label="Subscription"><svg class="icon"><use href="#key"/></svg></button>
        <button class="tool" aria-label="Communication"><svg class="icon"><use href="#dish"/></svg></button>
        <button class="tool" aria-label="Favorites"><svg class="icon"><use href="#star"/></svg></button>
        <button class="tool" aria-label="Help"><svg class="icon"><use href="#info"/></svg></button>
        <button class="drop" aria-label="Help options"><svg><use href="#down"/></svg></button>
      </div>
      <div class="aero">
        <div class="window-buttons">
          <button aria-label="Minimize"><svg><use href="#min"/></svg></button>
          <button aria-label="Restore"><svg><use href="#restore"/></svg></button>
          <button class="wide" aria-label="Close"><svg><use href="#close"/></svg></button>
        </div>
      </div>
    </div>
    <nav class="menubar">
      <a href="#">File</a><a href="#">Edit</a><a href="#">View</a><a href="#">Insert</a><a href="#">Format</a><a href="#">Tools</a><a href="#">Draw</a><a href="#">Dimension</a><a href="#">Modify</a><a href="#">Parametric</a><a href="#">Window</a><a href="#">Help</a><a href="#">Express</a>
      <div class="doc-buttons">
        <button aria-label="Minimize drawing"><svg><use href="#min"/></svg></button>
        <button aria-label="Restore drawing"><svg><use href="#restore"/></svg></button>
        <button aria-label="Close drawing"><svg><use href="#close"/></svg></button>
      </div>
    </nav>
  </header>

  <div class="toolrow">
    <div class="toolbar">
      <span class="grip first"></span>
      <button class="tool" aria-label="QNew"><svg class="icon"><use href="#new"/></svg></button>
      <button class="tool" aria-label="Open drawing"><svg class="icon"><use href="#open"/></svg></button>
      <button class="tool" aria-label="Save drawing"><svg class="icon"><use href="#save"/></svg></button>
      <span class="sep"></span>
      <button class="tool" aria-label="Plot"><svg class="icon"><use href="#print"/></svg></button>
      <button class="tool" aria-label="Plot preview"><svg class="icon"><use href="#preview"/></svg></button>
      <button class="tool" aria-label="Publish"><svg class="icon"><use href="#publish"/></svg></button>
      <button class="tool" aria-label="3DDWF"><svg class="icon"><use href="#globe"/></svg></button>
      <button class="tool" aria-label="Markup"><svg class="icon"><use href="#markup"/></svg></button>
      <span class="sep"></span>
      <button class="tool" aria-label="Cut"><svg class="icon"><use href="#cut"/></svg></button>
      <button class="tool" aria-label="Copy to clipboard"><svg class="icon"><use href="#copyclip"/></svg></button>
      <button class="tool" aria-label="Paste"><svg class="icon"><use href="#paste"/></svg></button>
      <button class="tool" aria-label="Match properties"><svg class="icon"><use href="#match"/></svg></button>
      <button class="tool" aria-label="Block editor"><svg class="icon"><use href="#blockedit"/></svg></button>
      <span class="sep"></span>
      <button class="tool" aria-label="Undo"><svg class="icon"><use href="#undo"/></svg></button>
      <button class="drop std" aria-label="Undo list"><svg><use href="#down"/></svg></button>
      <button class="tool" aria-label="Redo"><svg class="icon"><use href="#redo"/></svg></button>
      <button class="drop std off" aria-label="Redo list"><svg><use href="#down"/></svg></button>
      <span class="sep"></span>
      <button class="tool" aria-label="Pan"><svg class="icon"><use href="#pan"/></svg></button>
      <button class="tool" aria-label="Zoom realtime"><svg class="icon"><use href="#zoom"/></svg></button>
      <button class="tool" aria-label="Zoom window"><svg class="icon"><use href="#zoomwin"/></svg></button>
      <button class="tool" aria-label="Zoom previous"><svg class="icon"><use href="#zoomprev"/></svg></button>
      <span class="sep"></span>
      <button class="tool" aria-label="Properties"><svg class="icon"><use href="#props"/></svg></button>
      <button class="tool" aria-label="DesignCenter"><svg class="icon"><use href="#dcenter"/></svg></button>
      <button class="tool" aria-label="Tool palettes"><svg class="icon"><use href="#palette"/></svg></button>
      <button class="tool" aria-label="Sheet set manager"><svg class="icon"><use href="#sheet"/></svg></button>
      <button class="tool" aria-label="Markup set manager"><svg class="icon"><use href="#markset"/></svg></button>
      <button class="tool" aria-label="QuickCalc"><svg class="icon"><use href="#calc"/></svg></button>
      <span class="sep"></span>
      <button class="tool" aria-label="Help"><svg class="icon"><use href="#help"/></svg></button>
    </div>
    <div class="toolbar styles">
      <span class="grip"></span>
      <button class="tool" aria-label="Text style"><svg class="icon"><use href="#textstyle"/></svg></button>
      <div class="combo style in"><select aria-label="Text style control"><option>Arial</option></select></div>
      <span class="sep"></span>
      <button class="tool" aria-label="Dimension style"><svg class="icon"><use href="#dimstyle"/></svg></button>
      <div class="combo style in"><select aria-label="Dim style control"><option>1 100</option></select></div>
      <span class="sep"></span>
      <button class="tool" aria-label="Table style"><svg class="icon"><use href="#tablestyle"/></svg></button>
      <div class="combo style"><select aria-label="Table style control"><option>Standard</option></select></div>
      <span class="sep"></span>
      <button class="tool" aria-label="Multileader style"><svg class="icon"><use href="#mleader"/></svg></button>
      <div class="combo style in"><select aria-label="Multileader style control"><option>Standard</option></select></div>
    </div>
  </div>

  <div class="toolrow">
    <div class="toolbar">
      <span class="grip first"></span>
      <div class="combo workspace"><select aria-label="Workspace"><option>AutoCAD Classic</option></select></div>
      <button class="tool" aria-label="Workspace settings"><svg class="icon"><use href="#gear"/></svg></button>
      <button class="tool" aria-label="My workspace"><svg class="icon"><use href="#mywork"/></svg></button>
    </div>
    <div class="toolbar">
      <span class="grip"></span>
      <button class="tool" aria-label="Layer properties"><svg class="icon"><use href="#layerprops"/></svg></button>
      <div class="combo layer">
        <select aria-label="Layer"><option>AS</option></select>
        <span class="marks">
          <svg class="icon"><use href="#bulb"/></svg><svg class="icon"><use href="#sun"/></svg><svg class="icon"><use href="#vpfreeze"/></svg><svg class="icon"><use href="#unlock"/></svg><i class="swatch gray"></i>
        </span>
      </div>
      <button class="tool" aria-label="Make layer current"><svg class="icon"><use href="#lcurrent"/></svg></button>
      <button class="tool" aria-label="Layer previous"><svg class="icon"><use href="#lprev"/></svg></button>
      <button class="tool" aria-label="Layer states"><svg class="icon"><use href="#lstate"/></svg></button>
    </div>
    <div class="toolbar">
      <span class="grip"></span>
      <div class="combo color"><select aria-label="Color control"><option>ByBlock</option></select><span class="marks"><i class="swatch"></i></span></div>
      <span class="sep"></span>
      <div class="combo ltype"><select aria-label="Linetype control"><option>ByLayer</option></select><span class="marks"><i class="rule"></i></span></div>
      <span class="sep"></span>
      <div class="combo lweight"><select aria-label="Lineweight control"><option>ByLayer</option></select><span class="marks"><i class="rule"></i></span></div>
      <span class="sep"></span>
      <div class="combo plot"><select aria-label="Plot style control" disabled><option>ByColor</option></select></div>
    </div>
  </div>

  <main class="workspace-area">
    <div class="palette left">
      <span class="grip-h"></span>
      <button aria-label="Line"><svg class="icon"><use href="#line"/></svg></button>
      <button aria-label="Construction line"><svg class="icon"><use href="#xline"/></svg></button>
      <button aria-label="Polyline"><svg class="icon"><use href="#pline"/></svg></button>
      <button aria-label="Polygon"><svg class="icon"><use href="#polygon"/></svg></button>
      <button aria-label="Rectangle"><svg class="icon"><use href="#rect"/></svg></button>
      <button aria-label="Arc"><svg class="icon"><use href="#arc"/></svg></button>
      <button aria-label="Circle"><svg class="icon"><use href="#circle"/></svg></button>
      <button aria-label="Revision cloud"><svg class="icon"><use href="#revcloud"/></svg></button>
      <button aria-label="Spline"><svg class="icon"><use href="#spline"/></svg></button>
      <button aria-label="Ellipse"><svg class="icon"><use href="#ellipse"/></svg></button>
      <button aria-label="Ellipse arc"><svg class="icon"><use href="#ellarc"/></svg></button>
      <button aria-label="Insert block"><svg class="icon"><use href="#insert"/></svg></button>
      <button aria-label="Make block"><svg class="icon"><use href="#makeblock"/></svg></button>
      <button aria-label="Point"><svg class="icon"><use href="#point"/></svg></button>
      <button aria-label="Hatch"><svg class="icon"><use href="#hatch"/></svg></button>
      <button aria-label="Gradient"><svg class="icon"><use href="#gradient"/></svg></button>
      <button aria-label="Region"><svg class="icon"><use href="#region"/></svg></button>
      <button aria-label="Table"><svg class="icon"><use href="#table"/></svg></button>
      <button aria-label="Multiline text"><svg class="icon"><use href="#mtext"/></svg></button>
    </div>

    <section class="drawing-window">
      <svg class="canvas" role="img" aria-label="Model space">
        <defs>
          <pattern id="soil" width="26" height="60" patternUnits="userSpaceOnUse"><path d="M.5 0v60M5.500 0v60M10.500 0v60M16.500 0v60M21.500 0v60" stroke="#cc6600"/></pattern>
          <pattern id="concrete" width="19" height="7" patternUnits="userSpaceOnUse"><path d="M1 1h2v1h-2zM8 2h3v1h-3zM3 4h2v1h-2zM13 1h1v2h-1zM16 3h2v1h-2zM10 4h1v1h-1z" fill="#fff"/></pattern>
          <pattern id="dense" width="7" height="7" patternUnits="userSpaceOnUse"><path d="M0 0h3v1h-3zM4 0h2v2h-2zM1 2h2v1h-2zM3 3h1v1h-1zM5 3h2v1h-2zM0 4h2v1h-2zM3 5h3v1h-3zM1 6h1v1h-1z" fill="#fff"/></pattern>
          <pattern id="rail" width="13" height="24" patternUnits="userSpaceOnUse"><path d="M2.500 0v9M2.500 14v10M9.500 0v9M9.500 14v10M2.500 9l2 2.500-2 2.500-2-2.500zM9.500 9l2 2.500-2 2.500-2-2.500zM5 11.500h2M12 11.500h1" stroke="#c8b464" fill="none"/></pattern>
          <g id="north"><circle r="5" stroke="#128a32"/><path d="M.5-11V-5M.5 5V11M-11 .5H-5M5 .5H11" stroke="#7f9fff"/><path d="M-3 4L0-4 3 4M-2 1h4" stroke="#f04020"/></g>
          <g id="footing"><path d="M0 0h17v8H0z" fill="#fff"/><path d="M2 3h2v1H2zM6 5h1v1H6zM9 2h2v1H9zM13 4h2v1h-2zM4 1h1v1H4zM10 6h2v1h-2z" fill="#000"/><path d="M.5 0v7.500h16V0" stroke="#d8c080"/></g>
          <g id="tick"><path d="M.5-6v12M-4 4l8-8" stroke="#f0f"/></g>
        </defs>
        <g class="sheet" transform="translate(-28 -100)">
          <path class="white" d="M85.500 100V900M90.500 100V900M222.500 100V900M234.500 100V900M262.500 100V900M936.500 100V900M941.500 100V900M1074.500 100V900M1086.500 100V900M1113.500 100V900"/>

          <!-- Potongan A-A -->
          <path class="red" d="M466.500 108V318M430 119.500H482M431 154.500H490M432 218.500H447L457 223.500H490M429 241.500H490M429 277.500H490M405 281.500h6"/>
          <g class="level"><text x="405" y="123">+5,15</text><text x="408" y="158">+3,80</text><text x="408" y="221">+1,69</text><text x="405" y="245">+1.15</text><text x="405" y="280">+0,00</text></g>
          <rect x="469" y="242" width="257" height="36" fill="url(#soil)"/>
          <path d="M467 240H496L467 279zM708 240H731V279H728z" fill="#000"/>
          <path class="white" d="M495.500 241.500H520M524 241.500H680"/>
          <path class="white dash" d="M495 242L468 278M708 250L728 278"/>
          <path class="brown" d="M598 114L501 162M598 120L503 167M598 114L695 162M598 120L693 167M512 150.500H684M514 154.500H683M553 132.500H645M558 135.500H640M564.500 136V150M567.500 136V150M629.500 136V150M632.500 136V150M594.500 120V150M596.500 113V150M600.500 113V150M602.500 136V144"/>
          <path d="M500 160v8M697 160v7" stroke="#a05050" stroke-width="2"/>
          <path d="M496 160L598 111L700 160" stroke="#d2143c" stroke-width="2"/>
          <path d="M497 162L598 114L699 162" stroke="#d2143c" stroke-dasharray="2 1"/>
          <path d="M598.500 112V154" stroke="#d8c080"/>
          <path class="blue" d="M528.500 162V241M537.500 162V278M594.500 162V278M602.500 162V278M659.500 162V278M667.500 162V278"/>
          <path class="white" d="M528.500 154.500H538.500V161.500H659.500V154.500H667.500V161.500H528.500zM659.500 154V161"/>
          <path d="M529 155h9v6h-9zM660 155h8v6h-8z" fill="url(#dense)"/>
          <g transform="translate(538 200)"><rect width="56" height="23" fill="url(#rail)"/><path class="tan" d="M0 .5H56"/></g>
          <g transform="translate(602 200)"><rect width="57" height="23" fill="url(#rail)"/><path class="tan" d="M0 .5H58"/></g>
          <path class="white" d="M529.500 200V223M531.500 200V223M528 200.500h4"/><path d="M665 200h3v23h-3z" fill="#fff"/>
          <rect x="528" y="223" width="140" height="7" fill="#000"/><rect x="528" y="223" width="140" height="7" fill="url(#dense)"/>
          <path class="white" d="M528.500 223.500H667.500V241M528.500 229.500H667.500M528.500 223V241"/>
          <path d="M529 230h8v11h-8zM595 230h8v11h-8zM660 230h7v11h-7z" fill="#000" stroke="#00f"/>
          <path d="M530 231h6v9h-6zM596 231h6v9h-6zM661 231h5v9h-5z" fill="url(#dense)"/>
          <path d="M460 279H736" stroke="#00f" stroke-width="2"/><path d="M466 277.500H733" stroke="#8a8aff"/>
          <use href="#footing" x="524" y="277"/><use href="#footing" x="590" y="277"/><use href="#footing" x="655" y="277"/>
          <path class="magenta" d="M526 295.500H555M577 295.500H620M641 295.500H671M532.500 285V298M598.500 285V302M663.500 285V298"/>
          <use href="#tick" x="532" y="295"/><use href="#tick" x="598" y="295"/><use href="#tick" x="663" y="295"/>
          <path class="green" d="M532.500 298V306M598.500 301V306M663.500 298V306"/>
          <g class="green"><circle cx="532.500" cy="312.500" r="6"/><circle cx="598" cy="312.500" r="6"/><circle cx="663.500" cy="312.500" r="6"/></g>
          <g class="dim"><text x="565" y="299">2.00</text><text x="630" y="299">2.00</text></g>
          <g class="axis"><text x="532" y="315">1</text><text x="598" y="315">2</text><text x="663" y="315">3</text></g>
          <path class="white" d="M663 144L672 131L676 127M664 146L672 133H676M665 152L671 141H676M668 184L674 179L677 170H680M668 211L674 206L676 198H679M668 229L672 226L674 218H677M664 257L672 252L675 243H678"/>
          <path d="M676 125h38v5h-38zM676 130h45v5h-45zM676 138h42v5h-42zM680 167h18v5h-18zM679 195h18v5h-18zM676 216h32v5h-32zM677 238h27v5h-27zM677 244h34v5h-34z" fill="#fff"/>
          <path d="M678.500 242v7M683.500 242v7M688.500 242v7M694.500 242v7M699.500 242v7M704.500 242v7" stroke="#cc6600"/>
          <path d="M672 326H720" stroke="#128a32" stroke-width="2"/>
          <text class="caption" x="675" y="324">Potongan A-A</text>
          <path d="M691 326h10v5h-10zM705 326h4v5h-4zM711 326h6v5h-6z" fill="#fff"/>
          <use href="#north" x="723" y="326"/>

          <!-- Potongan B-B -->
          <path class="magenta" d="M433 375.500H596M619 375.500H782"/>
          <use href="#tick" x="439" y="375"/><use href="#tick" x="775" y="375"/>
          <path class="red" d="M411.500 388V603M375 388.500H428M376 439.500H436M378 502.500H392L403 508.500H436M374 526.500H436M375 562.500H436M351 566.500h6"/>
          <g class="level"><text x="351" y="392">+5,15</text><text x="354" y="442">+3,80</text><text x="354" y="506">+1,69</text><text x="351" y="529">+1.15</text><text x="351" y="565">+0,00</text></g>
          <path class="orange" d="M440 392.500H776M440 394.500H776M440 402.500H776M440 404.500H776M440 413.500H776M440 415.500H776M440 416.500H776M440 429.500H776M440 431.500H776M440 443.500H474M440 445.500H474M440 446.500H474M440 452.500H474M743 443.500H776M743 445.500H776M743 446.500H776M743 452.500H776M438.500 388V421M439.500 388V452M440.500 421V452M775.500 389V421M776.500 389V452M436 468.500h2"/>
          <path d="M439 389H776" stroke="#d2143c" stroke-width="3"/>
          <g class="brace">
            <path d="M477 398L542 433L607 398L673 433L738 398M477 433L542 398L607 433L673 398L738 433" stroke="#964600" stroke-width="5"/>
            <path d="M477 398L542 433L607 398L673 433L738 398M477 433L542 398L607 433L673 398L738 433" stroke="#000" stroke-width="3"/>
          </g>
          <path class="brown" d="M540.500 391V439M544.500 391V439M605.500 391V439M609.500 391V439M671.500 391V439M675.500 391V439M736.500 391V439M739.500 391V439M478.500 391V439M538 400l2-4h5l2 4M538 433l3 3h4l2-3M603 400l2-4h5l2 4M603 433l3 3h4l2-3M669 400l2-4h5l2 4M669 433l3 3h4l2-3"/>
          <path d="M475 390V439M741 390V439M446 443v9" stroke="#a05050" stroke-width="2"/>
          <path class="blue" d="M473.500 447V562M481.500 447V562M603.500 447V562M611.500 447V562M734.500 447V562M742.500 447V562"/>
          <path d="M474 440h268v6h-268z" fill="#000"/>
          <path class="white" d="M473.500 439.500H742.500V446.500H473.500zM481.500 439V447M603.500 439V447M611.500 439V447M734.500 439V447"/>
          <path d="M474 440h7v6h-7zM604 440h7v6h-7zM735 440h7v6h-7z" fill="url(#dense)"/>
          <g transform="translate(481 484)"><rect width="122" height="24" fill="url(#rail)"/><path class="tan" d="M0 .5H122"/></g>
          <g transform="translate(612 484)"><rect width="122" height="24" fill="url(#rail)"/><path class="tan" d="M0 .5H123"/></g>
          <path d="M740 484h3v24h-3z" fill="#fff"/>
          <rect x="412" y="525" width="390" height="37" fill="url(#soil)"/>
          <path d="M411 524H440L411 563zM780 524H806V563H804z" fill="#000"/>
          <path d="M474 508h269v5h-269z" fill="#000"/><path d="M474 508h269v5h-269z" fill="url(#concrete)"/>
          <path class="white" d="M473.500 507.500H742.500V524M473.500 513.500H742.500M473.500 507V514M440 524.500H449M453 524.500H460M464 524.500H752"/>
          <path class="white dash" d="M440 525L412 562M780 531L804 562"/>
          <path d="M474 514h7v10h-7zM604 514h7v10h-7zM735 514h6v10h-6z" fill="#000" stroke="#00f" stroke-width="2"/>
          <path d="M475 515h5v8h-5zM605 515h5v8h-5zM736 515h5v8h-5z" fill="url(#dense)"/>
          <path d="M400 563.500H815" stroke="#00f" stroke-width="3"/><path d="M401 563.500H425M486 563.500H730" stroke="#fff"/><path d="M400.500 562v4M815.500 562v4" class="white"/>
          <use href="#footing" x="469" y="562"/><use href="#footing" x="599" y="562"/><use href="#footing" x="730" y="562"/>
          <path class="magenta" d="M470 580.500H531M552 580.500H662M683 580.500H745M477.500 570V587M607.500 570V587M738.500 570V587"/>
          <use href="#tick" x="477" y="580"/><use href="#tick" x="607" y="580"/><use href="#tick" x="738" y="580"/>
          <path class="green" d="M477.500 587V591M607.500 587V591M738.500 587V591"/>
          <g class="green"><circle cx="477" cy="597" r="6"/><circle cx="608" cy="597" r="6"/><circle cx="738" cy="597" r="6"/></g>
          <g class="dim"><text x="607" y="379">10.30</text><text x="541" y="583">4.00</text><text x="672" y="583">4.00</text></g>
          <g class="axis"><text x="477" y="600">C</text><text x="608" y="600">B</text><text x="738" y="600">A</text></g>
          <path class="white" d="M740 430L746 425L749 415H752M742 440L747 436L749 428H751M743 493L748 490L751 481H754M743 512L747 508L749 501H751M739 541L746 536L749 528H752"/>
          <path d="M752 413h44v5h-44zM751 426h42v5h-42zM754 479h18v5h-18zM751 499h31v5h-31zM752 522h27v6h-27zM752 527h34v5h-34z" fill="#fff"/>
          <path d="M757.500 525v7M762.500 525v7M767.500 525v7M772.500 525v7" stroke="#cc6600"/>
          <text class="caption" x="712" y="611">Potongan B-B</text>
          <use href="#north" x="760" y="614"/>

          <!-- crosshair -->
          <path class="white" d="M511 366.500H1126M818.500 100V900M805.500 353.500H831.500V379.500H805.500z"/>
        </g>
      </svg>
      <div class="scroll vertical">
        <button aria-label="Scroll up"><svg><use href="#up"/></svg></button>
        <span class="track before"></span><span class="thumb"></span><span class="track after"></span>
        <button aria-label="Scroll down"><svg><use href="#down"/></svg></button>
      </div>
      <div class="tabs">
        <div class="tab-nav">
          <button class="bar-l" aria-label="First tab"><svg><use href="#left"/></svg></button>
          <button aria-label="Previous tab"><svg><use href="#left"/></svg></button>
          <button aria-label="Next tab"><svg><use href="#right"/></svg></button>
          <button class="bar-r" aria-label="Last tab"><svg><use href="#right"/></svg></button>
        </div>
        <button class="tab active">Model</button>
        <button class="tab">Layout1</button>
        <button class="tab">Layout2</button>
        <span class="tab-space"></span>
        <div class="scroll horizontal">
          <span class="splitter"></span>
          <button aria-label="Scroll left"><svg><use href="#left"/></svg></button>
          <span class="track before"></span><span class="thumb"></span><span class="track after"></span>
          <button aria-label="Scroll right"><svg><use href="#right"/></svg></button>
        </div>
      </div>
      <div class="corner"></div>
    </section>

    <div class="palette dimension">
      <span class="grip-h"></span>
      <button aria-label="Linear"><svg class="icon"><use href="#dlin"/></svg></button>
      <button aria-label="Aligned"><svg class="icon"><use href="#dali"/></svg></button>
      <button aria-label="Arc length"><svg class="icon"><use href="#darc"/></svg></button>
      <button aria-label="Ordinate"><svg class="icon"><use href="#dord"/></svg></button>
      <span class="sep-h"></span>
      <button aria-label="Radius"><svg class="icon"><use href="#drad"/></svg></button>
      <button aria-label="Jogged"><svg class="icon"><use href="#djog"/></svg></button>
      <button aria-label="Diameter"><svg class="icon"><use href="#ddia"/></svg></button>
      <button aria-label="Angular"><svg class="icon"><use href="#dang"/></svg></button>
      <span class="sep-h"></span>
      <button aria-label="Quick dimension"><svg class="icon"><use href="#dquick"/></svg></button>
      <button aria-label="Baseline"><svg class="icon"><use href="#dbase"/></svg></button>
      <button aria-label="Continue"><svg class="icon"><use href="#dcont"/></svg></button>
      <button aria-label="Dimension space"><svg class="icon"><use href="#dspace"/></svg></button>
      <button aria-label="Dimension break"><svg class="icon"><use href="#dbreak"/></svg></button>
      <span class="sep-h"></span>
      <button aria-label="Tolerance"><svg class="icon"><use href="#tol"/></svg></button>
      <button aria-label="Center mark"><svg class="icon"><use href="#center"/></svg></button>
      <button aria-label="Inspection"><svg class="icon"><use href="#inspect"/></svg></button>
      <button aria-label="Jogged linear"><svg class="icon"><use href="#joglin"/></svg></button>
      <span class="sep-h"></span>
      <button aria-label="Dimension edit"><svg class="icon"><use href="#dedit"/></svg></button>
      <button aria-label="Dimension text edit"><svg class="icon"><use href="#dtedit"/></svg></button>
      <button aria-label="Dimension update"><svg class="icon"><use href="#dupd"/></svg></button>
      <span class="sep-h"></span>
      <button aria-label="Dimension style"><svg class="icon"><use href="#dimstyle"/></svg></button>
    </div>

    <div class="palette-stack">
      <div class="palette">
        <span class="grip-h"></span>
        <button aria-label="Erase"><svg class="icon"><use href="#erase"/></svg></button>
        <button aria-label="Copy"><svg class="icon"><use href="#copy"/></svg></button>
        <button aria-label="Mirror"><svg class="icon"><use href="#mirror"/></svg></button>
        <button aria-label="Offset"><svg class="icon"><use href="#offset"/></svg></button>
        <button aria-label="Array"><svg class="icon"><use href="#array"/></svg></button>
        <button aria-label="Move"><svg class="icon"><use href="#move"/></svg></button>
        <button aria-label="Rotate"><svg class="icon"><use href="#rotate"/></svg></button>
        <button aria-label="Scale"><svg class="icon"><use href="#scale"/></svg></button>
        <button aria-label="Stretch"><svg class="icon"><use href="#stretch"/></svg></button>
        <button aria-label="Trim"><svg class="icon"><use href="#trim"/></svg></button>
        <button aria-label="Extend"><svg class="icon"><use href="#extend"/></svg></button>
        <button aria-label="Break at point"><svg class="icon"><use href="#breakpt"/></svg></button>
        <button aria-label="Break"><svg class="icon"><use href="#break"/></svg></button>
        <button aria-label="Join"><svg class="icon"><use href="#join"/></svg></button>
        <button aria-label="Chamfer"><svg class="icon"><use href="#chamfer"/></svg></button>
        <button aria-label="Fillet"><svg class="icon"><use href="#fillet"/></svg></button>
        <button aria-label="Explode"><svg class="icon"><use href="#explode"/></svg></button>
      </div>
      <div class="palette">
        <span class="grip-h"></span>
        <button aria-label="Bring to front"><svg class="icon"><use href="#front"/></svg></button>
        <button aria-label="Send to back"><svg class="icon"><use href="#back"/></svg></button>
        <button aria-label="Bring above objects"><svg class="icon"><use href="#above"/></svg></button>
        <button aria-label="Send under objects"><svg class="icon"><use href="#under"/></svg></button>
      </div>
    </div>
  </main>

  <section class="command">
    <div class="command-grip"><span></span></div>
    <div class="history">
      <p>Command: *Cancel*</p>
      <p>Command: *Cancel*</p>
      <p>Command: *Cancel*</p>
    </div>
    <div class="scroll vertical">
      <button aria-label="History up"><svg><use href="#up"/></svg></button>
      <span class="thumb"></span>
      <button aria-label="History down"><svg><use href="#down"/></svg></button>
    </div>
    <div class="prompt">
      <label for="cmd">Command:</label>
      <input type="text" id="cmd">
      <div class="scroll horizontal">
        <button aria-label="Prompt left"><svg><use href="#left"/></svg></button>
        <span class="thumb"></span>
        <button aria-label="Prompt right"><svg><use href="#right"/></svg></button>
      </div>
    </div>
  </section>

  <footer class="statusbar">
    <span class="coords">-756.2622, 911.9270, 0.0000</span>
    <button aria-label="Snap"><svg class="icon"><use href="#snap"/></svg></button>
    <button aria-label="Grid"><svg class="icon"><use href="#grid"/></svg></button>
    <button class="on" aria-label="Ortho"><svg class="icon"><use href="#ortho"/></svg></button>
    <button aria-label="Polar"><svg class="icon"><use href="#polar"/></svg></button>
    <button class="on" aria-label="Object snap"><svg class="icon"><use href="#osnap"/></svg></button>
    <button aria-label="Object snap tracking"><svg class="icon"><use href="#otrack"/></svg></button>
    <button class="on" aria-label="Dynamic UCS"><svg class="icon"><use href="#ducs"/></svg></button>
    <button class="on" aria-label="Dynamic input"><svg class="icon"><use href="#dyn"/></svg></button>
    <button aria-label="Lineweight"><svg class="icon"><use href="#lwt"/></svg></button>
    <button aria-label="Quick properties"><svg class="icon"><use href="#qp"/></svg></button>
    <span class="push"></span>
    <button aria-label="Model"><svg class="icon"><use href="#model"/></svg></button>
    <button aria-label="Quick view layouts"><svg class="icon"><use href="#qview"/></svg></button>
    <span class="gap"></span>
    <button aria-label="Pan"><svg class="icon"><use href="#pan"/></svg></button>
    <button aria-label="Zoom"><svg class="icon"><use href="#zoom"/></svg></button>
    <button aria-label="SteeringWheel"><svg class="icon"><use href="#wheel"/></svg></button>
    <button aria-label="ShowMotion"><svg class="icon"><use href="#motion"/></svg></button>
    <span class="gap"></span>
    <button class="text"><svg class="icon"><use href="#anno"/></svg>1:1<svg class="caret"><use href="#down"/></svg></button>
    <button aria-label="Annotation visibility"><svg class="icon"><use href="#annovis"/></svg></button>
    <button aria-label="Annotation auto scale"><svg class="icon"><use href="#annoauto"/></svg></button>
    <span class="gap small"></span>
    <button class="text"><svg class="icon"><use href="#gear"/></svg>AutoCAD Classic<svg class="caret"><use href="#down"/></svg></button>
    <button aria-label="Toolbar lock"><svg class="icon"><use href="#tunlock"/></svg></button>
    <button class="tray" aria-label="Standards"><svg class="icon"><use href="#tray"/></svg></button>
    <button class="menu" aria-label="Status bar menu"><svg class="caret"><use href="#down"/></svg></button>
    <button aria-label="Clean screen"><svg class="icon"><use href="#clean"/></svg></button>
  </footer>
  <div class="taskbar"><span></span><span></span><span></span></div>
</body>
</html>
```

FILE: styles.css
```css
* { box-sizing: border-box; }
body { margin: 0; height: 100vh; display: flex; flex-direction: column; background: #686868; font: 12px "Open Sans", "Noto Sans", sans-serif; color: #000; overflow: hidden; }
button { margin: 0; padding: 0; border: 0; background: none; font: inherit; color: inherit; display: flex; align-items: center; justify-content: center; flex: none; }
select, input { font: inherit; margin: 0; border-radius: 0; }
svg { display: block; flex: none; }
.sprite { position: absolute; width: 0; height: 0; }

/* icons */
.icon { width: 18px; height: 18px; fill: none; stroke: #3b414d; }
.w { fill: url(#paper); }
.k { fill: #23272f; }
.b { stroke: #1670c4; }
.lb { fill: #b5e0f5; stroke: #1670c4; }

/* title and menu */
.header { display: grid; grid-template-columns: 38px 1fr; grid-template-rows: 23px 21px; flex: none; }
.app-button { grid-row: 1 / 3; height: 40px; background: linear-gradient(#b8b8b8, #757575 45%, #a9a9a9); border: solid #2c2c2c; border-width: 0 1px 1px 0; z-index: 1; }
.app-logo { width: 38px; height: 39px; }
.titlebar { display: flex; border-bottom: 1px solid #25282d; background: linear-gradient(90deg, #3f5877, #4c4f74 30%, #2c3e54 60%, #1f2b3b); min-width: 0; }
.quick, .infocenter { display: flex; background: linear-gradient(#a8a8a8, #7b7b7b); flex: none; }
.quick { padding: 0 2px 0 4px; border-right: 1px solid #2c2c2c; }
.tool { width: 23px; height: 22px; }
.drop { width: 9px; height: 22px; }
.drop svg { width: 6px; height: 6px; }
.drop.more { width: 13px; }
.drop.more svg { width: 8px; height: 8px; border-top: 1px solid #111; }
.drop.std { width: 12px; }
.lit { background: #aab7c4; }
.off { opacity: .5; }
.title { flex: 1; display: flex; justify-content: center; align-items: center; gap: 18px; padding-left: 20px; border-bottom: 1px solid #8ea4bd; color: #05070a; text-shadow: 0 0 4px #e0e6f4, 0 0 6px #c7d0e6, 0 0 8px #aab6d4; white-space: nowrap; overflow: hidden; }
.infocenter .drop:first-child { width: 13px; }
.search { width: 181px; height: 21px; border: 1px solid #888; background: #f2f2f2; padding: 4px 2px 0; font-style: italic; font-size: 11px; }
.search::placeholder { color: #777; opacity: 1; }
.aero { width: 122px; display: flex; justify-content: flex-end; padding-right: 3px; background: linear-gradient(#c5eaf2, #a9d8e4); }
.window-buttons { display: flex; height: 17px; border: 1px solid #8aa5b3; border-top: 0; border-radius: 0 0 5px 5px; background: linear-gradient(#d2edf4, #b8dde8); }
.window-buttons button { width: 27px; height: 15px; border-right: 1px solid #93adb9; }
.window-buttons .wide { width: 47px; border: 0; }
.window-buttons svg, .doc-buttons svg { width: 14px; height: 14px; fill: #fff; stroke: #4a535b; }
.menubar { display: flex; align-items: center; gap: 22px; padding-left: 14px; background: linear-gradient(#9c9c9c, #555); min-width: 0; }
.menubar a { color: #fff; text-decoration: none; line-height: 20px; }
.doc-buttons { display: flex; gap: 3px; margin-left: auto; padding-right: 2px; }

/* docked toolbars */
.toolrow { display: flex; gap: 2px; flex: none; margin-bottom: 3px; }
.toolbar { display: flex; align-items: center; height: 24px; background: #ebebeb; border: solid #333; border-width: 1px 1px 1px 0; }
.grip { width: 9px; align-self: stretch; flex: none; background: radial-gradient(circle, #111 1px, transparent 1px) 1px 3px / 3px 3px, #606060; }
.grip.first { width: 6px; }
.sep { width: 6px; height: 18px; flex: none; background: linear-gradient(90deg, transparent 2px, #999 2px, #999 3px, transparent 3px); }
.styles .sep { width: 7px; }
.combo { position: relative; height: 22px; }
.combo select { appearance: none; width: 100%; height: 22px; padding: 0 18px 0 4px; border: 1px solid #7f7f7f; border-radius: 2px; background: linear-gradient(#f4f4f4, #cdcdcd); color: #000; line-height: 18px; opacity: 1; }
.combo::after { content: ""; position: absolute; right: 4px; top: 9px; border: 4px solid transparent; border-top-color: #000; border-bottom: 0; }
.combo.style { width: 119px; }
.combo.in select { padding-left: 17px; }
.combo.workspace { width: 173px; }
.combo.workspace select { padding-left: 8px; }
.combo.layer { width: 299px; }
.combo.layer select { padding-left: 85px; }
.combo.color { width: 150px; }
.combo.color select { padding-left: 18px; }
.combo.ltype { width: 159px; }
.combo.ltype select { padding-left: 68px; }
.combo.ltype .rule { width: 60px; }
.combo.lweight { width: 125px; }
.combo.lweight select { padding-left: 43px; }
.combo.lweight .rule { width: 35px; }
.combo.plot { width: 119px; }
.combo.plot select { padding-left: 8px; background: #f0f0f0; color: #888; }
.combo.plot::after { border-top-color: #aaa; }
.marks { position: absolute; left: 4px; top: 0; height: 22px; display: flex; align-items: center; pointer-events: none; }
.layer .marks { left: 1px; }
.layer .marks .icon { width: 17px; height: 16px; }
.swatch { width: 10px; height: 10px; border: 1px solid #000; background: #fff; }
.swatch.gray { background: #828282; margin-left: 2px; }
.rule { height: 1px; background: #000; }

/* workspace */
.workspace-area { flex: 1; display: flex; align-items: flex-start; padding: 1px 3px 4px 0; min-height: 0; }
.palette { width: 25px; display: flex; flex-direction: column; background: #ebebeb; border: 1px solid #333; flex: none; }
.palette.left { width: 22px; border-left: 0; margin-right: 4px; }
.palette button { height: 22px; }
.palette.left button { padding-right: 3px; }
.palette.dimension { margin: 0 3px 0 4px; }
.grip-h { height: 8px; background: radial-gradient(circle, #111 1px, transparent 1px) 2px 1px / 3px 3px, #5a5a5a; }
.sep-h { height: 6px; margin: 0 2px; background: linear-gradient(transparent 2px, #a5a5a5 2px, #a5a5a5 3px, transparent 3px); }
.palette-stack { display: flex; flex-direction: column; }
.drawing-window { flex: 1; align-self: stretch; min-width: 0; display: grid; grid-template-columns: 1fr 17px; grid-template-rows: 1fr 18px; border: 2px solid #8d8d8d; border-top-width: 1px; border-bottom: 0; border-right-color: #fff; }
.canvas { width: 100%; height: 100%; min-height: 0; background: #000; cursor: none; }
.sheet { fill: none; stroke-width: 1; shape-rendering: crispEdges; }
.white { stroke: #fff; }
.red { stroke: #f00; }
.brown { stroke: #964600; }
.orange { stroke: #cc6600; }
.blue { stroke: #0000e6; }
.tan { stroke: #c8b464; }
.magenta { stroke: #f0f; }
.green { stroke: #0f0; }
.dash { stroke-dasharray: 5 2; }
.sheet text { font: 8px "Liberation Sans", sans-serif; stroke: none; }
.level text { fill: #f00; }
.dim text { fill: #f0f; text-anchor: middle; }
.axis text { fill: #00f; font-weight: bold; text-anchor: middle; }
.sheet .caption { fill: #7f9fff; font-size: 6px; }

/* scrollbars and tabs */
.scroll { display: flex; background: #f0f0f0; }
.scroll svg { width: 7px; height: 7px; }
.scroll .thumb { flex: none; border: 1px solid #8e8e8e; border-radius: 2px; background: linear-gradient(#f6f6f6, #d0d0d4); }
.vertical { flex-direction: column; padding: 0 1px; }
.vertical button { height: 17px; }
.vertical .thumb { height: 15px; }
.vertical .before { flex: 340; }
.vertical .after { flex: 125; }
.horizontal { flex: none; padding-bottom: 3px; }
.horizontal button { width: 17px; }
.horizontal .thumb { width: 15px; }
.tabs .horizontal { flex: 425; }
.horizontal .before { flex: 213; }
.horizontal .after { flex: 161; }
.splitter { width: 6px; border: 1px solid #8e9aa5; border-radius: 2px; background: #fff; }
.tabs { display: flex; background: #f0f0f0; min-width: 0; }
.tab-nav { display: flex; height: 16px; }
.tab-nav button { width: 15px; border: 1px solid #aaa; border-left: 0; }
.tab-nav svg { width: 8px; height: 8px; opacity: .6; }
.bar-l::before, .bar-r::after { content: ""; width: 1px; height: 9px; background: #555; }
.tab { position: relative; height: 16px; padding: 0 3px; width: 54px; font-size: 11px; }
.tab::after { content: ""; position: absolute; right: -1px; top: 0; height: 16px; width: 1px; background: #555; transform: skewX(-18deg); }
.tab.active { width: 52px; background: #000; color: #fff; clip-path: polygon(0 0, 100% 0, 92% 100%, 10% 100%); }
.tab-space { flex: 603; }
.corner { background: #f0f0f0; }

/* command line */
.command { flex: none; display: grid; grid-template-columns: 13px 1fr 17px; grid-template-rows: 51px 18px; background: #fff; font: 13px/16px "Liberation Mono", monospace; border-bottom: 1px solid #222; }
.command-grip { grid-row: 1 / 3; background: #9c9c9c; padding-top: 2px; }
.command-grip span { display: block; width: 10px; height: 6px; background: radial-gradient(circle, #222 1px, transparent 1px) 0 0 / 3px 3px; }
.history { padding: 1px 1px 0; }
.history p { margin: 0; }
.command .vertical { justify-content: space-between; }
.prompt { grid-column: 2 / 4; display: flex; border-top: 1px solid #999; padding-left: 1px; }
.prompt label { padding-top: 2px; line-height: 15px; }
.prompt input { flex: 1; min-width: 0; border: 0; outline: 0; background: none; }
.prompt .horizontal { width: 70px; margin-right: 14px; padding: 1px 0 0; }
.prompt .horizontal .thumb { margin-right: auto; }

/* status bar */
.statusbar { flex: none; display: flex; height: 23px; background: linear-gradient(#757575, #939393); border-bottom: 1px solid #333; }
.statusbar button { width: 22px; height: 22px; border-right: 1px solid #585858; background: linear-gradient(#b4b4b4, #969696); }
.statusbar .on { background: linear-gradient(#b2dbe4, #d2ecf1 40%, #8fc6d3); }
.coords { width: 197px; padding: 0 9px; line-height: 23px; font-size: 11px; font-family: "Liberation Sans", sans-serif; border-right: 1px solid #585858; }
.push { flex: 1; border-right: 1px solid #585858; }
.gap { width: 11px; border-right: 1px solid #585858; }
.gap.small { width: 6px; }
.statusbar .text { width: auto; padding: 0 4px 0 2px; gap: 3px; font-size: 11px; font-family: "Liberation Sans", sans-serif; }
.caret { width: 8px; height: 8px; }
.statusbar .tray { width: 27px; background: #888; }
.statusbar .menu { width: 16px; }
.taskbar { flex: none; display: flex; gap: 4px; height: 3px; padding-left: 57px; background: linear-gradient(90deg, #27404d, #5d6c74 40%, #243444 75%, #46505a); }
.taskbar span { width: 58px; background: #cdd3d8; }
```
